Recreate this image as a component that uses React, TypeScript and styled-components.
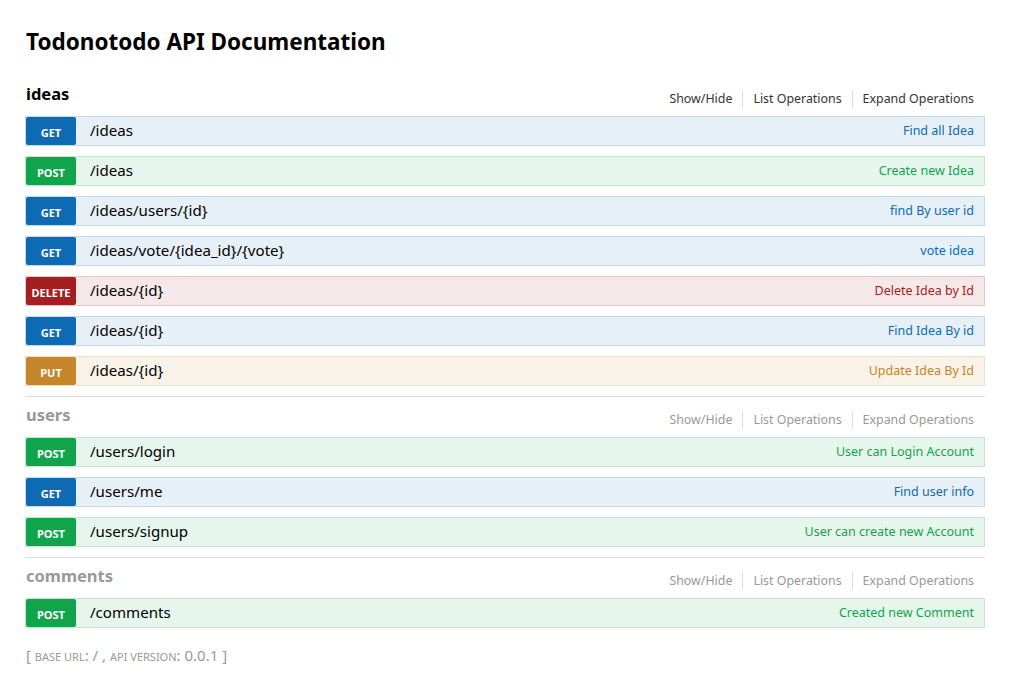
import React from "react";
import styled, { createGlobalStyle } from "styled-components";

const Global = createGlobalStyle`
  html, body { margin: 0; padding: 0; background: #fff; }
  body { font-family: "Noto Sans", "Open Sans", sans-serif; color: #000; }
`;

type Method = "get" | "post" | "put" | "delete";

const palette: Record<Method, { bg: string; border: string; main: string }> = {
  get: { bg: "#e7f0f7", border: "#c3d9ec", main: "#0f6ab4" },
  post: { bg: "#e7f6ec", border: "#c3e8d1", main: "#10a54a" },
  put: { bg: "#f9f2e9", border: "#f0e0ca", main: "#c5862b" },
  delete: { bg: "#f5e8e8", border: "#e8c6c7", main: "#a41e22" },
};

const Page = styled.div`
  padding: 27px 35px 0 25px;
  width: 960px;
`;

const Title = styled.h1`
  margin: 0 0 19px 1px;
  font-size: 22.5px;
  line-height: 30px;
  font-weight: bold;
  color: #000;
`;

const Section = styled.section<{ $last?: boolean }>`
  padding-bottom: ${(p) => (p.$last ? "0" : "10px")};
  border-bottom: ${(p) => (p.$last ? "none" : "1px solid #ddd")};
`;

const Header = styled.div`
  display: flex;
  align-items: flex-start;
  justify-content: space-between;
  height: 35px;
  margin-bottom: 5px;
`;

const SectionName = styled.h2<{ $active?: boolean }>`
  margin: 6px 0 0 1px;
  font-size: 16.5px;
  line-height: 24px;
  font-weight: bold;
  color: ${(p) => (p.$active ? "#000" : "#999")};
`;

const Options = styled.ul`
  display: flex;
  list-style: none;
  margin: 14px 0 0 0;
  padding: 0;
`;

const Option = styled.li<{ $active?: boolean; $end?: boolean }>`
  font-size: 12.4px;
  line-height: 18px;
  padding: 0 10px;
  color: ${(p) => (p.$active ? "#333" : "#999")};
  border-right: ${(p) => (p.$end ? "none" : "1px solid #ddd")};
  margin-right: ${(p) => (p.$end ? "1px" : "0")};
`;

const Ops = styled.div`
  display: flex;
  flex-direction: column;
  gap: 10px;
`;

const Row = styled.div<{ $m: Method }>`
  display: flex;
  align-items: center;
  height: 28px;
  background: ${(p) => palette[p.$m].bg};
  border: 1px solid ${(p) => palette[p.$m].border};
`;

const Badge = styled.span<{ $m: Method }>`
  display: flex;
  align-items: center;
  justify-content: center;
  width: 50px;
  height: 28px;
  background: ${(p) => palette[p.$m].main};
  color: #fff;
  font-size: 11px;
  font-weight: bold;
  text-transform: uppercase;
  border-radius: 2px;
  padding-top: 2px;
  box-sizing: border-box;
`;

const Path = styled.span`
  padding: 0 0 2px 14px;
  font-size: 15.1px;
  color: #000;
  flex: 1;
`;

const Summary = styled.span<{ $m: Method }>`
  font-size: 12.5px;
  color: ${(p) => palette[p.$m].main};
  padding: 0 10px 2px 0;
`;

const Footer = styled.div`
  margin: 17px 0 0 1px;
  font-size: 15px;
  color: #999;
  line-height: 20px;
`;

const Small = styled.span`
  text-transform: uppercase;
  font-size: 11px;
`;

type Op = { m: Method; path: string; summary: string };

const sections: { name: string; active?: boolean; ops: Op[] }[] = [
  {
    name: "ideas",
    active: true,
    ops: [
      { m: "get", path: "/ideas", summary: "Find all Idea" },
      { m: "post", path: "/ideas", summary: "Create new Idea" },
      { m: "get", path: "/ideas/users/{id}", summary: "find By user id" },
      { m: "get", path: "/ideas/vote/{idea_id}/{vote}", summary: "vote idea" },
      { m: "delete", path: "/ideas/{id}", summary: "Delete Idea by Id" },
      { m: "get", path: "/ideas/{id}", summary: "Find Idea By id" },
      { m: "put", path: "/ideas/{id}", summary: "Update Idea By Id" },
    ],
  },
  {
    name: "users",
    ops: [
      { m: "post", path: "/users/login", summary: "User can Login Account" },
      { m: "get", path: "/users/me", summary: "Find user info" },
      { m: "post", path: "/users/signup", summary: "User can create new Account" },
    ],
  },
  {
    name: "comments",
    ops: [{ m: "post", path: "/comments", summary: "Created new Comment" }],
  },
];

export default function App() {
  return (
    <>
      <Global />
      <Page>
        <Title>Todonotodo API Documentation</Title>
        {sections.map((s, i) => (
          <Section key={s.name} $last={i === sections.length - 1}>
            <Header>
              <SectionName $active={s.active}>{s.name}</SectionName>
              <Options>
                <Option $active={s.active}>Show/Hide</Option>
                <Option $active={s.active}>List Operations</Option>
                <Option $active={s.active} $end>
                  Expand Operations
                </Option>
              </Options>
            </Header>
            <Ops>
              {s.ops.map((o, j) => (
                <Row key={j} $m={o.m}>
                  <Badge $m={o.m}>{o.m}</Badge>
                  <Path>{o.path}</Path>
                  <Summary $m={o.m}>{o.summary}</Summary>
                </Row>
              ))}
            </Ops>
          </Section>
        ))}
        <Footer>
          [ <Small>Base url</Small>: / , <Small>Api version</Small>: 0.0.1 ]
        </Footer>
      </Page>
    </>
  );
}
